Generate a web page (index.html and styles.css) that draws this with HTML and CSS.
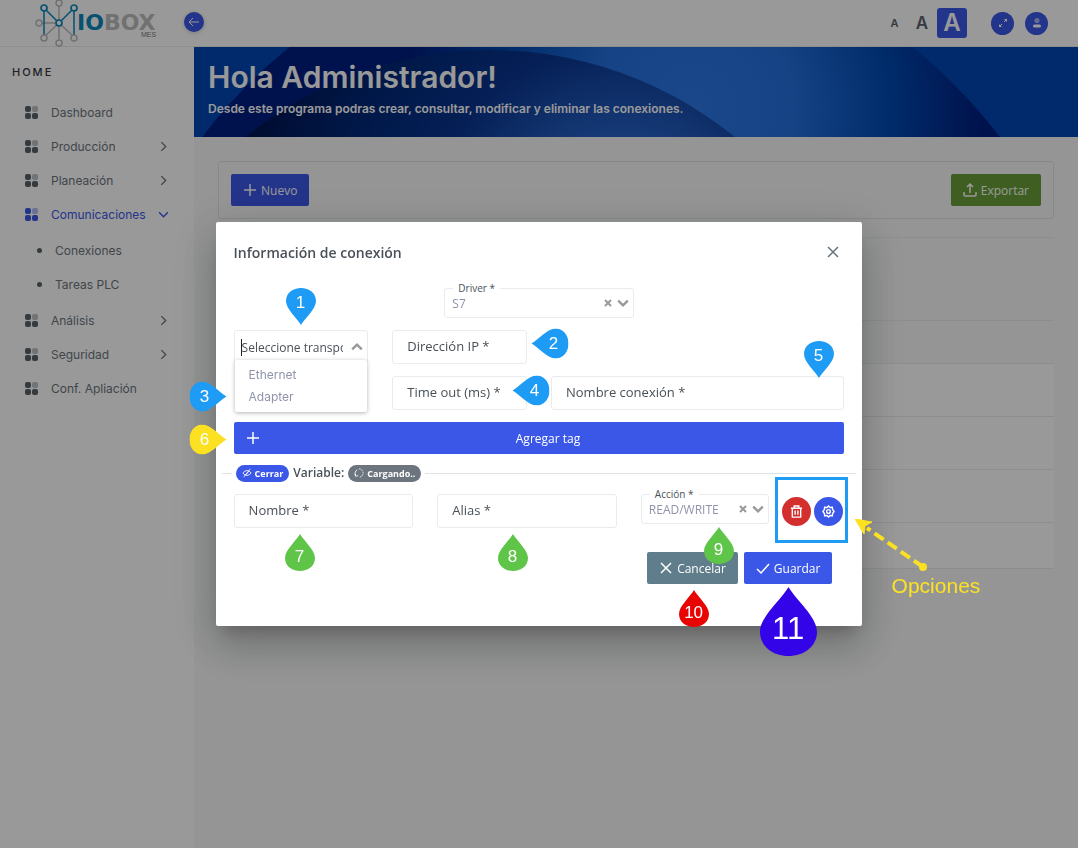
FILE: index.html
```html
<!DOCTYPE html>
<html lang="es">
<head>
<meta charset="utf-8">
<title>IOBOX MES - Conexiones</title>
<link rel="stylesheet" href="styles.css">
</head>
<body>
<svg class="sprite" aria-hidden="true">
  <symbol id="grid" viewBox="0 0 13 13"><rect width="6" height="6" rx="2"/><rect x="7" width="6" height="6" rx="2" opacity=".4"/><rect y="7" width="6" height="6" rx="2"/><rect x="7" y="7" width="6" height="6" rx="2"/></symbol>
  <symbol id="right" viewBox="0 0 10 10"><path d="M3 1l4 4-4 4"/></symbol>
  <symbol id="down" viewBox="0 0 10 10"><path d="M1 3l4 4 4-4"/></symbol>
  <symbol id="plus" viewBox="0 0 14 14"><path d="M7 1v12M1 7h12"/></symbol>
  <symbol id="cross" viewBox="0 0 14 14"><path d="M2 2l10 10M12 2L2 12"/></symbol>
  <symbol id="pin-shape" viewBox="0 0 30 37"><path d="M15 0C19 7 30 16 30 24C30 32 23 37 15 37S0 32 0 24C0 16 11 7 15 0Z"/></symbol>
</svg>

<header class="topbar">
  <svg class="logo" viewBox="0 0 126 48" role="img" aria-label="IOBOX MES">
    <g fill="none" stroke="#bdbdbd" stroke-width="1.5">
      <path d="M24 7v33M7 24h14M24 24L10 37M24 24l14 13"/>
    </g>
    <g fill="none" stroke="#0d87bd" stroke-width="1.5"><path d="M9 11v25M39 11v25M11 11l13 13 13-13"/></g>
    <g fill="#fff" stroke="#bdbdbd" stroke-width="1.5"><circle cx="24" cy="4" r="3"/><circle cx="4" cy="24" r="3"/><circle cx="9" cy="39" r="3"/><circle cx="39" cy="39" r="3"/><circle cx="24" cy="44" r="3"/></g>
    <g fill="#fff" stroke="#0d87bd" stroke-width="1.7"><circle cx="9" cy="9" r="3"/><circle cx="39" cy="9" r="3"/><circle cx="24" cy="24" r="3"/></g>
    <text class="logo-word" x="42" y="31"><tspan fill="#0d87bd">IO</tspan><tspan fill="#bdbdbd">BOX</tspan></text>
    <text class="logo-sub" x="106" y="38">MES</text>
  </svg>
  <button class="round collapse" aria-label="Contraer menú"><svg viewBox="0 0 12 12"><path d="M11 6H1M5 2L1 6l4 4"/></svg></button>
  <div class="tools">
    <button class="size size-s">A</button>
    <button class="size size-m">A</button>
    <button class="size size-l">A</button>
    <button class="round tool expand" aria-label="Pantalla completa"><svg viewBox="0 0 12 12"><path d="M7 5l2-2M5 7L3 9"/><path class="solid" d="M7 2h3v3zM2 7v3h3z"/></svg></button>
    <button class="round tool" aria-label="Usuario"><svg class="user" viewBox="0 0 12 12"><circle cx="6" cy="3.500" r="2.600" opacity=".55"/><rect x="2" y="7.500" width="8" height="3" rx="1.500"/></svg></button>
  </div>
</header>

<div class="shell">
  <nav class="sidebar">
    <h2 class="nav-title">HOME</h2>
    <ul class="menu">
      <li><a href="#"><svg class="gi"><use href="#grid"/></svg>Dashboard</a></li>
      <li><a href="#"><svg class="gi"><use href="#grid"/></svg>Producción<svg class="chev"><use href="#right"/></svg></a></li>
      <li><a href="#"><svg class="gi"><use href="#grid"/></svg>Planeación<svg class="chev"><use href="#right"/></svg></a></li>
      <li><a href="#" class="active"><svg class="gi"><use href="#grid"/></svg>Comunicaciones<svg class="chev"><use href="#down"/></svg></a>
        <ul class="submenu">
          <li><a href="#">Conexiones</a></li>
          <li><a href="#">Tareas PLC</a></li>
        </ul>
      </li>
      <li><a href="#"><svg class="gi"><use href="#grid"/></svg>Análisis<svg class="chev"><use href="#right"/></svg></a></li>
      <li><a href="#"><svg class="gi"><use href="#grid"/></svg>Seguridad<svg class="chev"><use href="#right"/></svg></a></li>
      <li><a href="#"><svg class="gi"><use href="#grid"/></svg>Conf. Apliación</a></li>
    </ul>
  </nav>

  <main class="main">
    <section class="banner">
      <svg class="banner-art" viewBox="0 0 884 90" preserveAspectRatio="none" aria-hidden="true">
        <defs>
          <radialGradient id="outer" gradientUnits="userSpaceOnUse" cx="500" cy="60" r="400"><stop offset="0" stop-color="#2d78e8"/><stop offset=".25" stop-color="#2470dd"/><stop offset=".5" stop-color="#0048b0"/><stop offset=".72" stop-color="#001f80"/><stop offset="1" stop-color="#001f80"/></radialGradient>
          <radialGradient id="inner" gradientUnits="userSpaceOnUse" cx="430" cy="190" r="390"><stop offset="0" stop-color="#3a80f0"/><stop offset=".27" stop-color="#2460c4"/><stop offset=".5" stop-color="#0a3590"/><stop offset=".75" stop-color="#002878"/><stop offset="1" stop-color="#001350"/></radialGradient>
        </defs>
        <circle cx="407" cy="390" r="499" fill="url(#outer)"/>
        <circle cx="296" cy="391" r="388" fill="url(#inner)"/>
      </svg>
      <h1>Hola Administrador!</h1>
      <p>Desde este programa podras crear, consultar, modificar y eliminar las conexiones.</p>
    </section>
    <section class="content">
      <div class="toolbar">
        <button class="btn primary"><svg class="ic"><use href="#plus"/></svg>Nuevo</button>
        <button class="btn success"><svg class="ic" viewBox="0 0 14 14"><path d="M7 10V1M4 4l3-3 3 3M1 9v3q0 1 1 1h10q1 0 1-1V9"/></svg>Exportar</button>
      </div>
      <table class="table" aria-label="Conexiones">
        <thead><tr class="head-a"><th></th></tr><tr class="head-b"><th></th></tr></thead>
        <tbody><tr><td></td></tr><tr><td></td></tr><tr><td></td></tr><tr class="last"><td></td></tr></tbody>
      </table>
    </section>
  </main>
</div>

<div class="mask">
  <div class="dialog" role="dialog" aria-labelledby="dlg-title">
    <div class="dialog-head">
      <h2 id="dlg-title">Información de conexión</h2>
      <button class="close" aria-label="Cerrar"><svg class="ic"><use href="#cross"/></svg></button>
    </div>
    <form class="form">
      <div class="picker driver">
        <label for="driver">Driver *</label>
        <select id="driver"><option>S7</option></select>
        <button type="button" class="clear" aria-label="Quitar driver"><svg viewBox="0 0 8 8"><path d="M1 1l6 6M7 1L1 7"/></svg></button>
        <svg class="caret" viewBox="0 0 10 8"><path d="M1 2l4 4 4-4"/></svg>
      </div>
      <div class="fields">
        <div class="combo">
          <span class="cursor"></span>
          <input type="text" role="combobox" aria-expanded="true" aria-controls="transport" aria-label="Seleccione transporte" placeholder="Seleccione transporte">
          <svg class="caret" viewBox="0 0 10 8"><path d="M1 6l4-4 4 4"/></svg>
          <ul class="options" id="transport" role="listbox"><li role="option">Ethernet</li><li role="option">Adapter</li></ul>
        </div>
        <label class="field"><span>Dirección IP *</span><input type="text"></label>
        <label class="field timeout"><span>Time out (ms) *</span><input type="text"></label>
        <label class="field wide"><span>Nombre conexión *</span><input type="text"></label>
      </div>
      <button type="button" class="btn primary add"><svg class="ic"><use href="#plus"/></svg><span>Agregar tag</span></button>
      <div class="divider">
        <button type="button" class="pill blue"><svg viewBox="0 0 12 12"><path d="M1 6q5-6 10 0q-5 6-10 0M2 11l8-10M5 8l3-4"/></svg>Cerrar</button>
        <strong>Variable:</strong>
        <span class="pill gray"><svg viewBox="0 0 12 12"><path d="M2 9A5 5 0 0 1 4 2M1 7l1 3 3-1"/><path d="M6 1a5 5 0 0 1 0 10" stroke-dasharray="2 1"/></svg>Cargando..</span>
      </div>
      <div class="tag-row">
        <label class="field"><span>Nombre *</span><input type="text"></label>
        <label class="field"><span>Alias *</span><input type="text"></label>
        <div class="tag-end">
          <div class="picker">
            <label for="action">Acción *</label>
            <select id="action"><option>READ/WRITE</option></select>
            <button type="button" class="clear" aria-label="Quitar acción"><svg viewBox="0 0 8 8"><path d="M1 1l6 6M7 1L1 7"/></svg></button>
            <svg class="caret" viewBox="0 0 10 8"><path d="M1 2l4 4 4-4"/></svg>
          </div>
          <div class="tag-buttons">
            <button type="button" class="round opt red" aria-label="Eliminar"><svg viewBox="0 0 14 14"><path d="M1 3.500h12M4.500 3.500V1h5v2.500M2.500 3.500V13h9V3.500M5.500 6v4.500M8.500 6v4.500"/></svg></button>
            <button type="button" class="round opt" aria-label="Configurar"><svg viewBox="0 0 14 14"><path d="M7 1l1.600 1.600 2.600-.2.200 2.400L13 7l-1.600 2.200-.2 2.400-2.600-.2L7 13l-1.600-1.600-2.600.2-.2-2.400L1 7l1.600-2.200.2-2.400 2.600.2Z"/><circle cx="7" cy="7" r="2"/></svg></button>
          </div>
        </div>
      </div>
      <div class="actions">
        <button type="button" class="btn secondary"><svg class="ic"><use href="#cross"/></svg>Cancelar</button>
        <button type="button" class="btn primary"><svg class="ic" viewBox="0 0 14 14"><path d="M1 8l4 4 8-9"/></svg>Guardar</button>
      </div>
    </form>

    <div class="pin p1 up"><svg><use href="#pin-shape"/></svg><b>1</b></div>
    <div class="pin p2 side-l"><svg><use href="#pin-shape"/></svg><b>2</b></div>
    <div class="pin p3 side-r"><svg><use href="#pin-shape"/></svg><b>3</b></div>
    <div class="pin p4 side-l"><svg><use href="#pin-shape"/></svg><b>4</b></div>
    <div class="pin p5 up"><svg><use href="#pin-shape"/></svg><b>5</b></div>
    <div class="pin p6 side-r yellow"><svg><use href="#pin-shape"/></svg><b>6</b></div>
    <div class="pin p7 green"><svg><use href="#pin-shape"/></svg><b>7</b></div>
    <div class="pin p8 green"><svg><use href="#pin-shape"/></svg><b>8</b></div>
    <div class="pin p9 green"><svg><use href="#pin-shape"/></svg><b>9</b></div>
    <div class="pin p10 crimson"><svg><use href="#pin-shape"/></svg><b>10</b></div>
    <div class="pin p11 violet"><svg viewBox="0 0 30 37" preserveAspectRatio="none"><path d="M15 0C19 7 30 16 30 24C30 32 23 37 15 37S0 32 0 24C0 16 11 7 15 0Z"/></svg><b>11</b></div>
    <div class="frame"></div>
    <svg class="arrow" viewBox="0 0 76 56"><path d="M68 48L12 9" stroke="#fbe122" stroke-width="4" stroke-dasharray="11 5" fill="none"/><path d="M0 0l17 3-7 4-1 8Z" fill="#fbe122" stroke="#fbe122"/><circle cx="68" cy="48" r="4" fill="#fbe122"/></svg>
    <div class="note">Opciones</div>
  </div>
</div>
</body>
</html>
```

FILE: styles.css
```css
* { box-sizing: border-box; }
body { margin: 0; min-height: 100vh; display: flex; flex-direction: column; background: #f8f9fa; font-family: Inter, sans-serif; color: #495057; }
button { font: inherit; border: 0; padding: 0; background: none; color: inherit; }
ul { list-style: none; margin: 0; padding: 0; }
h1, h2, p { margin: 0; }
a { color: inherit; text-decoration: none; }
svg { display: block; fill: none; stroke: currentColor; }
.sprite { position: absolute; width: 0; height: 0; }

.topbar { display: flex; align-items: center; height: 47px; background: #fff; border-bottom: 1px solid #ebebeb; padding: 0 30px 0 35px; }
.logo { width: 126px; height: 48px; stroke: none; flex: none; }
.logo-word { font: 700 22px "DejaVu Sans", sans-serif; }
.logo-sub { font: 7px "Liberation Sans", sans-serif; fill: #777; }
.round { display: flex; align-items: center; justify-content: center; border-radius: 50%; background: #3b57e8; color: #fff; flex: none; }
.collapse { width: 20px; height: 20px; margin: -3px 0 0 23px; box-shadow: 0 1px 4px rgba(0, 0, 0, .2); }
.collapse svg { width: 12px; height: 12px; }
.tools { display: flex; align-items: center; margin-left: auto; }
.size { font-weight: 600; color: #5c636a; }
.size-s { font-size: 11px; margin-right: 17px; }
.size-m { font-size: 17px; margin-right: 9px; }
.size-l { width: 30px; height: 30px; border-radius: 3px; background: #3b57e8; color: #fff; font-size: 24px; line-height: 30px; margin-right: 24px; }
.tool { width: 23px; height: 23px; }
.tool svg { width: 12px; height: 12px; }
.tool .solid { fill: #fff; stroke: none; }
.expand { margin-right: 11px; }
.tool .user { fill: #fff; stroke: none; }

.shell { display: flex; flex: 1; }
.sidebar { flex: 0 0 18%; background: #fff; padding: 18px 0 0 12px; }
.nav-title { font-size: 11px; font-weight: 500; line-height: 15px; letter-spacing: 2px; color: #343a40; margin-bottom: 15px; }
.menu { font-size: 12px; color: #6c757d; }
.menu a { display: flex; align-items: center; height: 34px; padding: 0 25px 0 13px; }
.menu .active { color: #3b57e8; }
.gi { width: 13px; height: 13px; margin-right: 13px; fill: #596168; stroke: none; }
.active .gi { fill: #3b57e8; }
.chev { width: 11px; height: 11px; margin-left: auto; stroke-width: 1.2; }
.submenu { padding: 2px 0; }
.submenu a { padding-left: 25px; }
.submenu a::before { content: ""; width: 5px; height: 5px; border-radius: 50%; background: #596168; margin-right: 13px; }

.main { flex: 1; min-width: 0; }
.banner { position: relative; height: 90px; background: #0046b2; color: #fff; padding: 12px 14px; overflow: hidden; }
.banner-art { position: absolute; inset: 0; width: 100%; height: 100%; stroke: none; }
.banner h1 { position: relative; font-size: 30px; font-weight: 600; line-height: 36px; }
.banner p { position: relative; font-size: 12px; font-weight: 600; line-height: 16px; margin-top: 6px; }
.content { padding: 24px; }
.toolbar { display: flex; align-items: center; justify-content: space-between; padding: 12px; border: 1px solid #e0e3e6; border-radius: 3px; margin-bottom: 18px; }
.btn { display: flex; align-items: center; height: 32px; padding: 0 12px; border-radius: 2px; color: #fff; font: 400 12px "Open Sans", sans-serif; white-space: nowrap; }
.ic { width: 14px; height: 14px; flex: none; }
.btn .ic { margin-right: 4px; stroke-width: 1.5; }
.primary { background: #3b57e8; }
.success { background: #689f38; }
.secondary { background: #607d8b; }
.table { width: 100%; border-collapse: collapse; border-top: 1px solid #e9ecef; }
.table th, .table td { padding: 0; border-bottom: 1px solid #e9ecef; }
.head-a { height: 83px; }
.head-b { height: 43px; }
.table tbody { background: #fff; }
.table tbody tr { height: 53px; }
.table tbody .last { height: 46px; }

.mask { position: fixed; inset: 0; display: flex; align-items: center; justify-content: center; background: rgba(0, 0, 0, .4); }
.dialog { position: relative; width: 60%; background: #fff; border-radius: 2px; font-family: "Open Sans", sans-serif; box-shadow: 0 11px 15px -7px rgba(0, 0, 0, .2), 0 24px 38px 3px rgba(0, 0, 0, .14), 0 9px 46px 8px rgba(0, 0, 0, .12); }
.dialog-head { display: flex; align-items: center; justify-content: space-between; height: 60px; padding: 0 22px 0 18px; }
.dialog-head h2 { font-size: 14px; font-weight: 600; }
.close { color: #6c757d; }
.close .ic { stroke-width: 1.5; }
.form { padding: 6px 18px 42px; }
.picker { position: relative; display: flex; align-items: center; height: 30px; border: 1px solid #e9ecef; border-radius: 3px; padding: 0 4px 0 7px; color: #999; }
.picker label { position: absolute; left: 8px; top: -9px; padding: 0 5px; background: #fff; color: #495057; font-size: 10px; line-height: 16px; }
.picker select { appearance: none; flex: 1; min-width: 0; border: 0; padding: 0; background: none; color: #8f94ab; font: 12px "Open Sans", sans-serif; }
.clear svg { width: 8px; height: 8px; stroke-width: 2; }
.caret { width: 12px; height: 10px; margin-left: 5px; stroke-width: 2; flex: none; }
.driver { width: 31%; margin: 0 auto 12px; }
.fields { display: grid; grid-template-columns: repeat(4, minmax(0, 1fr)); gap: 12px 24px; margin-bottom: 12px; }
.combo { position: relative; display: flex; align-items: center; min-width: 0; height: 34px; border: 1px solid #e9ecef; border-radius: 3px; padding: 0 4px 0 6px; color: #999; }
.combo input { flex: 1; min-width: 0; border: 0; padding: 0; outline: 0; font: 12px "Open Sans", sans-serif; }
.combo input::placeholder { color: #495057; }
.cursor { width: 1px; height: 17px; background: #222; }
.combo .caret { margin-left: 8px; }
.options { position: absolute; left: 0; right: 0; top: 29px; padding: 4px 14px; background: #fff; border-radius: 2px; box-shadow: 0 1px 4px rgba(0, 0, 0, .3); color: #8f94ab; font: 12px/22px Inter, sans-serif; }
.field { position: relative; display: block; min-width: 0; }
.field span { position: absolute; left: 15px; top: 0; font-size: 13px; line-height: 32px; white-space: nowrap; }
.field input { display: block; width: 100%; height: 34px; border: 1px solid #e9ecef; border-radius: 3px; padding: 0 14px; background: #fff; font: 13px "Open Sans", sans-serif; }
.timeout { grid-column: 2; }
.wide { grid-column: 3 / 5; }
.add { width: 100%; }
.add span { flex: 1; text-align: center; }
.divider { display: flex; align-items: center; gap: 4px; height: 18px; margin: 10px -12px 12px; }
.divider::before, .divider::after { content: ""; height: 1px; background: #dee2e6; }
.divider::before { width: 10px; }
.divider::after { flex: 1; }
.divider strong { font-size: 12px; line-height: 18px; font-weight: 600; }
.pill { display: flex; align-items: center; gap: 3px; height: 17px; padding: 0 6px; border-radius: 9px; color: #fff; font-size: 9px; font-weight: 700; }
.pill svg { width: 10px; height: 10px; }
.blue { background: #3b57e8; }
.gray { background: #6c757d; }
.tag-row { display: grid; grid-template-columns: minmax(0, 15fr) minmax(0, 15fr) minmax(0, 17fr); gap: 24px; }
.tag-end { display: flex; gap: 13px; }
.tag-end .picker { flex: 1; min-width: 0; }
.tag-buttons { display: flex; align-items: center; gap: 3px; padding-right: 1px; }
.opt { width: 29px; height: 29px; }
.opt svg { width: 13px; height: 13px; stroke-width: 1.5; }
.red { background: #d32f2f; }
.actions { display: flex; justify-content: flex-end; gap: 6px; padding: 24px 12px 0 0; }

.pin { position: absolute; width: 30px; height: 37px; color: #fff; font-family: "Liberation Sans", sans-serif; font-size: 17px; }
.pin svg { width: 100%; height: 100%; fill: #1d9bf5; stroke: none; }
.pin b { position: absolute; inset: 8px 0 0; display: flex; align-items: center; justify-content: center; font-weight: 400; }
.up svg { transform: rotate(180deg); }
.up b { inset: 0 0 7px; }
.side-l svg { transform: rotate(-90deg); }
.side-r svg { transform: rotate(90deg); }
.side-l b { inset: 0 0 0 8px; }
.side-r b { inset: 0 6px 0 0; }
.yellow svg { fill: #fbe122; }
.green svg { fill: #5fc548; }
.crimson svg { fill: #e90404; }
.violet svg { fill: #3304e8; }
.p1 { left: 70px; top: 66px; }
.p2 { left: 319px; top: 103px; }
.p3 { left: -23px; top: 156px; }
.p4 { left: 300px; top: 150px; }
.p5 { left: 588px; top: 119px; }
.p6 { left: -23px; top: 199px; }
.p7 { left: 69px; top: 312px; }
.p8 { left: 282px; top: 312px; }
.p9 { left: 488px; top: 305px; }
.p10 { left: 463px; top: 368px; }
.p11 { left: 544px; top: 365px; width: 57px; height: 69px; font-size: 31px; }
.p11 b { inset: 15px 0 0; }
.frame { position: absolute; left: 559px; top: 255px; width: 73px; height: 66px; border: 3px solid #1d9bf5; }
.arrow { position: absolute; left: 639px; top: 297px; width: 76px; height: 56px; stroke: none; }
.note { position: absolute; left: 676px; top: 352px; color: #fbe122; font: 21px/24px "Liberation Sans", sans-serif; }
```
